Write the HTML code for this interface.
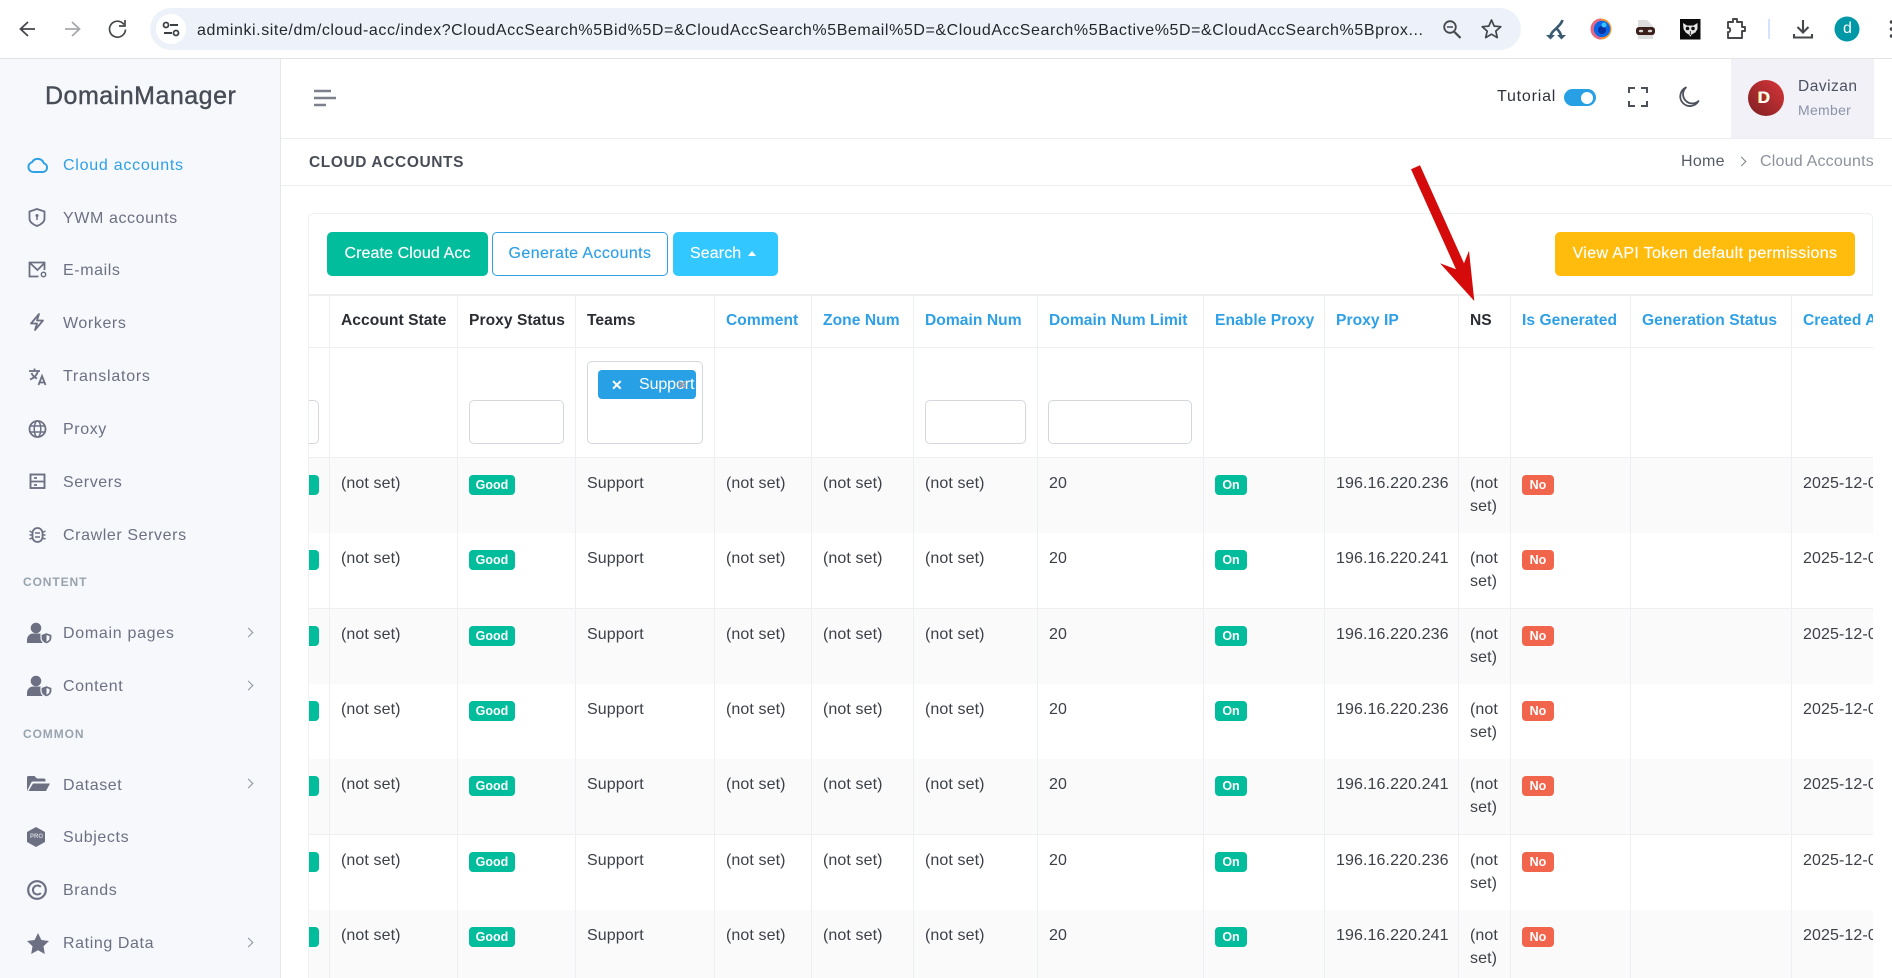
<!DOCTYPE html>
<html><head><meta charset="utf-8"><title>Cloud Accounts</title>
<style>
*{box-sizing:border-box;margin:0;padding:0}
html,body{width:1892px;height:978px;overflow:hidden;background:#fff;font-family:"Liberation Sans",sans-serif}
.a{position:absolute}
.t{position:absolute;white-space:nowrap;line-height:20px;height:20px}
.nav{font-size:16px;letter-spacing:.6px;color:#6d7083;left:63px}
.sec{font-size:12px;font-weight:bold;letter-spacing:.9px;color:#98a3ae;left:23px}
.chev{position:absolute;left:245px;width:7px;height:7px;border-top:1.6px solid #8c92a0;border-right:1.6px solid #8c92a0;transform:rotate(45deg)}
svg{position:absolute;overflow:visible}
.btn{position:absolute;top:232px;height:44px;border-radius:5px;font-size:16px;letter-spacing:.4px;display:flex;align-items:center;justify-content:center;color:#fff;-webkit-text-stroke:.15px}
#tb{position:absolute;left:308px;top:294px;width:1565px;height:684px;overflow:hidden;border-top:2px solid #eceef0;border-left:1px solid #eef0f2}
.r{position:absolute;left:0;display:flex;width:1700px;border-bottom:1px solid #eeeff1;font-size:16px;letter-spacing:.1px;color:#3d4048;background:#fff}
.s{background:#fafafa}
.c{flex:none;border-right:1.5px solid #eeeff1;padding:14px 0 0 11px;line-height:23px;white-space:nowrap;height:100%;position:relative;overflow:hidden}
.w0{width:21px}.w1{width:128px}.w2{width:118px}.w3{width:139px}.w4{width:97px}.w5{width:102px}.w6{width:124px}.w7{width:166px}.w8{width:121px}.w9{width:134px}.w10{width:52px}.w11{width:120px}.w12{width:161px}.w13{width:120px}
.h{font-size:15.6px;letter-spacing:.05px;font-weight:bold;color:#2a2d33;padding-top:13px}
.l{color:#2ea0e6;font-weight:bold}
.b{display:inline-block;height:20px;line-height:20px;border-radius:4px;color:#fff;font-size:12.5px;font-weight:bold;text-align:center;position:absolute;top:16.5px;left:11px;letter-spacing:0}
.g{background:#02bd9c}.n{background:#f1654c}
.in{position:absolute;top:52px;height:44px;border:1.5px solid #d4d8de;border-radius:5px;background:#fff}
.bc{position:absolute;left:-13px;top:17px;width:23px;height:20px;border-radius:4px;background:#02bd9c}
</style></head><body>

<!-- browser chrome -->
<div class="a" style="left:0;top:0;width:1892px;height:59px;background:#fff;border-bottom:1.5px solid #e3e4e6"></div>
<div class="a" style="left:150px;top:8px;width:1371px;height:42px;border-radius:21px;background:#edf2fa"></div>
<div class="a" style="left:156px;top:14px;width:30px;height:30px;border-radius:15px;background:#fff"></div>
<svg style="left:0;top:0" width="200" height="58" fill="none">
<path d="M35 29H21M28 22l-7.500 7 7.500 7" stroke="#45474b" stroke-width="1.800"/>
<path d="M65 29h14M72 22l7.500 7-7.500 7" stroke="#a8a9ac" stroke-width="1.800"/>
<path d="M124 24.500a8 8 0 1 0 1.500 5M125 20v6h-6" stroke="#45474b" stroke-width="1.700"/>
<path d="M170 25h8M164 33h8" stroke="#3c3f44" stroke-width="2"/><circle cx="166" cy="25" r="2.500" stroke="#3c3f44" stroke-width="1.800"/><circle cx="176" cy="33" r="2.500" stroke="#3c3f44" stroke-width="1.800"/>
</svg>
<svg style="left:0;top:0" width="1500" height="58"><text x="197" y="35" font-family="Liberation Sans" font-size="16" fill="#24272b" textLength="1226" lengthAdjust="spacing">adminki.site/dm/cloud-acc/index?CloudAccSearch%5Bid%5D=&amp;CloudAccSearch%5Bemail%5D=&amp;CloudAccSearch%5Bactive%5D=&amp;CloudAccSearch%5Bprox...</text></svg>
<svg style="left:1430px;top:0" width="462" height="58" fill="none">
<circle cx="20" cy="27" r="5.800" stroke="#45474b" stroke-width="1.800"/><path d="M24.500 32l6 6" stroke="#45474b" stroke-width="2.200"/><path d="M17 27h6" stroke="#45474b" stroke-width="1.500"/>
<path d="M61.500 20l2.700 6.100 6.600.6-5 4.400 1.500 6.500-5.800-3.400-5.800 3.400 1.500-6.500-5-4.400 6.600-.6z" stroke="#45474b" stroke-width="1.700" stroke-linejoin="round"/>
<path d="M132.500 20c-1 4-5 7-7 9s-4.500 4-5 7M126 28c2 2 4.500 4 5 8" stroke="#3a5a72" stroke-width="2.600"/><path d="M116 35h9l-4.500 4.500zM127 35h9l-4.500 4.500z" fill="#3a5a72"/>
<circle cx="171" cy="29" r="10.500" fill="#f7962c"/><path d="M171 18.500a10.500 10.500 0 0 0 0 21z" fill="#df5aa0" opacity=".75"/><circle cx="172" cy="29" r="8.200" fill="#0a66e6"/><circle cx="172" cy="30" r="4" fill="#0a2f9e"/><circle cx="174" cy="25" r="2.500" fill="#38c4ff"/>
<path d="M208 20h9l6 6v13h-15z" fill="#dedede"/><rect x="206" y="27" width="19" height="8" rx="3" fill="#3b1f1b"/><ellipse cx="211" cy="31" rx="2.200" ry="1.300" fill="#d8d8d8"/><ellipse cx="220" cy="31" rx="2.200" ry="1.300" fill="#d8d8d8"/>
<rect x="250" y="19" width="20.500" height="20.500" fill="#0b0b0b"/><path d="M253 23l4 2.500h6.500l4-2.500v6l-2.500 4-4.500 3.500-4.500-3.500-2.500-4z" fill="#e4e4e4"/><circle cx="257.500" cy="28.500" r="1.800" fill="#0b0b0b"/><circle cx="263" cy="28.500" r="1.800" fill="#0b0b0b"/><path d="M260.300 31v4M255.500 33l4 2.500M265 33l-4 2.500" stroke="#0b0b0b" stroke-width=".8"/>
<path d="M298 22h5v-3h4v3h5v5h3v4h-3v7h-14v-6c3 .5 3-5 0-4z" stroke="#45474b" stroke-width="1.900" stroke-linejoin="round"/>
<rect x="338" y="19" width="2" height="20" fill="#d3e3fd"/>
<path d="M373 20v12M367.500 27l5.500 5.500 5.500-5.500" stroke="#45474b" stroke-width="2.100"/><path d="M364 34v3.500h18V34" stroke="#45474b" stroke-width="2.100"/>
<circle cx="417" cy="29" r="12.500" fill="#0097a7"/>
<circle cx="461.500" cy="22" r="1.800" fill="#45474b"/><circle cx="461.500" cy="29" r="1.800" fill="#45474b"/><circle cx="461.500" cy="36" r="1.800" fill="#45474b"/>
</svg>
<div class="t" style="left:1843px;top:19px;font-size:16px;color:#fff">d</div>

<!-- sidebar -->
<div class="a" style="left:0;top:59px;width:281px;height:919px;background:#f6f8fb;border-right:1.5px solid #e4e6ea"></div>
<div class="t" style="left:45px;top:86px;font-size:25px;letter-spacing:.5px;color:#474c56;-webkit-text-stroke:.4px #474c56">DomainManager</div>

<svg style="left:0;top:0" width="60" height="978" fill="none" stroke="#6d7083" stroke-width="1.800">
<path d="M33.500 172a5 5 0 0 1-1.500-9.800 6.500 6.500 0 0 1 11.800 1a4.500 4.500 0 0 1-.8 8.800z" stroke="#2ea0e6" stroke-width="2" stroke-linejoin="round"/>
<path d="M37 209l7.500 2.500v7c0 3.500-3.500 6-7.500 7.500-4-1.500-7.500-4-7.500-7.500v-7z"/><circle cx="37" cy="215.500" r="1.500" fill="#6d7083" stroke="none"/><path d="M37 216v4" stroke-width="1.500"/>
<path d="M44.500 270v-7.500h-15v14h9M30 263l7.500 7 7-7"/><circle cx="43.500" cy="274.500" r="2.200" stroke-width="1.500"/>
<path d="M39 314l-8 9.500h6l-2 6.500 8-9.500h-6z" stroke-linejoin="round"/>
<path d="M29 371h11M34.500 368.500V371M38 371c-1 4-4 7-8 8.500M31.500 373c1 2.500 3 4.500 5.500 5.500"/><path d="M38.500 385l3.500-9 3.500 9M39.500 382.500h5"/>
<circle cx="37.500" cy="429" r="8"/><ellipse cx="37.500" cy="429" rx="3.300" ry="8" stroke-width="1.500"/><path d="M29.500 426h16M29.500 432h16" stroke-width="1.500"/>
<rect x="30.500" y="474.500" width="14" height="13.500" stroke-width="1.900"/><path d="M30.500 481.500h14M34 478h3M34 485h3"/>
<rect x="32.500" y="528" width="10" height="14" rx="5"/><path d="M35 533h5M35 537h5M29.500 531l3 1.500M29.500 535h3M29.500 539l3-1M45.500 531l-3 1.500M45.500 535h-3M45.500 539l-3-1" stroke-width="1.500"/>
<g stroke="none"><circle cx="36" cy="628" r="5.300" fill="#6d7083"/><path d="M27 643v-3c0-4 3-6.500 6-6.500h6c1.500 0 3 .5 3.500 1v8.500z" fill="#6d7083"/><path d="M46.500 632.500l5.500 2v3.500c0 3-2.500 5-5.500 6-3-1-5.500-3-5.500-6v-3.500z" fill="#6d7083" stroke="#f6f8fb" stroke-width="1.200"/><path d="M46.500 635l3 1.100v2c0 1.800-1.300 2.800-3 3.500z" fill="#f6f8fb"/></g>
<g stroke="none" transform="translate(0 53)"><circle cx="36" cy="628" r="5.300" fill="#6d7083"/><path d="M27 643v-3c0-4 3-6.500 6-6.500h6c1.500 0 3 .5 3.500 1v8.500z" fill="#6d7083"/><path d="M46.500 632.500l5.500 2v3.500c0 3-2.500 5-5.500 6-3-1-5.500-3-5.500-6v-3.500z" fill="#6d7083" stroke="#f6f8fb" stroke-width="1.200"/><path d="M46.500 635l3 1.100v2c0 1.800-1.300 2.800-3 3.500z" fill="#f6f8fb"/></g>
<path d="M27 791v-13.500c0-1 .6-1.500 1.500-1.500h6l2.500 2.500h7c1 0 1.500.5 1.500 1.500v1.500H33c-1 0-1.700.5-2 1.500zM33 783.500h17l-4 7.500H28.500z" fill="#6d7083" stroke="none"/>
<path d="M36 827l9 5v10l-9 5-9-5v-10z" fill="#6d7083" stroke="none"/>
<circle cx="37" cy="890" r="8.800" stroke-width="2.200"/><path d="M40.800 887a4.500 4.500 0 1 0 0 6" stroke-width="2"/>
<path d="M38 933l3.400 7 7.600 1-5.500 5.300 1.300 7.700-6.800-3.700-6.800 3.700 1.300-7.700-5.500-5.300 7.600-1z" fill="#6d7083" stroke="none"/>
</svg>
<div class="t" style="left:30px;top:833px;font-size:6px;line-height:8px;height:8px;font-weight:bold;color:#cfd2da;letter-spacing:0">PRO</div>

<div class="t nav" style="top:156px;color:#2ea0e6;letter-spacing:.75px">Cloud accounts</div>
<div class="t nav" style="top:209px">YWM accounts</div>
<div class="t nav" style="top:261px">E-mails</div>
<div class="t nav" style="top:314px">Workers</div>
<div class="t nav" style="top:367px;letter-spacing:.75px">Translators</div>
<div class="t nav" style="top:420px">Proxy</div>
<div class="t nav" style="top:473px">Servers</div>
<div class="t nav" style="top:526px">Crawler Servers</div>
<div class="t sec" style="top:572px">CONTENT</div>
<div class="t nav" style="top:624px;letter-spacing:.7px">Domain pages</div><div class="chev" style="top:629px"></div>
<div class="t nav" style="top:677px">Content</div><div class="chev" style="top:682px"></div>
<div class="t sec" style="top:724px">COMMON</div>
<div class="t nav" style="top:776px">Dataset</div><div class="chev" style="top:780px"></div>
<div class="t nav" style="top:828px">Subjects</div>
<div class="t nav" style="top:881px">Brands</div>
<div class="t nav" style="top:934px">Rating Data</div><div class="chev" style="top:939px"></div>

<!-- top header -->
<div class="a" style="left:281px;top:138px;width:1611px;height:1px;background:#eceef0"></div>
<div class="a" style="left:281px;top:185px;width:1611px;height:1px;background:#eceef0"></div>
<svg style="left:314px;top:88px" width="24" height="20"><path d="M0 3h17M0 10h22M0 17h12" stroke="#7b808c" stroke-width="2.400"/></svg>
<div class="t" style="left:1497px;top:87px;font-size:16px;letter-spacing:.8px;color:#2f323a">Tutorial</div>
<div class="a" style="left:1564px;top:89px;width:32px;height:17px;border-radius:9px;background:#27a0e5"></div>
<div class="a" style="left:1581px;top:91.500px;width:12px;height:12px;border-radius:6px;background:#fff"></div>
<svg style="left:1628px;top:87px" width="20" height="20" fill="none"><path d="M1 6V1h6M13 1h6v5M19 14v5h-6M7 19H1v-5" stroke="#4c505a" stroke-width="2"/></svg>
<svg style="left:1678px;top:86px" width="22" height="22" fill="none"><path d="M8 1.500A9.700 9.700 0 1 0 20.500 15 9 9 0 0 1 8 1.500z" stroke="#4c505a" stroke-width="1.800" stroke-linejoin="round"/></svg>
<div class="a" style="left:1731px;top:59px;width:143px;height:79px;background:#f1f1f7"></div>
<div class="a" style="left:1748px;top:80px;width:36px;height:36px;border-radius:18px;background:linear-gradient(45deg,#7d1f22,#d9363a)"></div>
<div class="t" style="left:1758px;top:88px;font-size:17px;font-weight:bold;color:#fff;text-shadow:-1px 0 #e0b030">D</div>
<div class="t" style="left:1798px;top:77px;font-size:15.500px;letter-spacing:.5px;color:#4c5262">Davizan</div>
<div class="t" style="left:1798px;top:100px;font-size:14px;letter-spacing:.3px;color:#8b93a7">Member</div>

<!-- breadcrumb bar -->
<div class="t" style="left:309px;top:153px;font-size:15.500px;font-weight:bold;letter-spacing:.6px;color:#474c56">CLOUD ACCOUNTS</div>
<div class="t" style="left:1681px;top:152px;font-size:16px;letter-spacing:.3px;color:#565b66">Home</div>
<div class="a" style="left:1738px;top:158px;width:7px;height:7px;border-top:1.400px solid #7c818c;border-right:1.400px solid #7c818c;transform:rotate(45deg)"></div>
<div class="t" style="left:1760px;top:152px;font-size:16px;letter-spacing:.2px;color:#8c929c">Cloud Accounts</div>

<!-- card -->
<div class="a" style="left:308px;top:213px;width:1565px;height:765px;border:1.500px solid #eef0f2;border-bottom:0;border-radius:5px 5px 0 0"></div>
<div class="btn" style="left:327px;width:161px;background:#02bd9c;letter-spacing:.1px">Create Cloud Acc</div>
<div class="btn" style="left:492px;width:176px;background:#fff;border:1.500px solid #2ea0e6;color:#2ea0e6">Generate Accounts</div>
<div class="btn" style="left:673px;width:105px;background:#33c7ff;justify-content:flex-start;padding-left:17px;letter-spacing:.1px">Search</div>
<div class="a" style="left:748px;top:251px;width:0;height:0;border-left:4.500px solid transparent;border-right:4.500px solid transparent;border-bottom:5px solid #fff"></div>
<div class="btn" style="left:1555px;width:300px;background:#ffbc0d;letter-spacing:.35px">View API Token default permissions</div>

<div id="tb">
<div class="r" style="top:0;height:52px">
<div class="c h w0"></div><div class="c h w1">Account State</div><div class="c h w2">Proxy Status</div><div class="c h w3">Teams</div><div class="c h l w4">Comment</div><div class="c h l w5">Zone Num</div><div class="c h l w6">Domain Num</div><div class="c h l w7">Domain Num Limit</div><div class="c h l w8">Enable Proxy</div><div class="c h l w9">Proxy IP</div><div class="c h w10">NS</div><div class="c h l w11">Is Generated</div><div class="c h l w12">Generation Status</div><div class="c h l w13">Created At</div>
</div>
<div class="r" style="top:52px;height:110px">
<div class="c w0"><div class="in" style="left:-40px;width:50px"></div></div><div class="c w1"></div><div class="c w2"><div class="in" style="left:11px;width:95px"></div></div>
<div class="c w3"><div class="in" style="left:11px;top:13px;width:116px;height:83px"></div>
<div class="a" style="left:22px;top:22px;width:98px;height:29px;border-radius:4px;background:#27a0e5"></div>
<div class="t" style="left:35px;top:27px;color:#fff;font-size:14px;font-weight:bold;letter-spacing:0">✕</div>
<div class="t" style="left:63px;top:27px;color:#fff;font-size:16px;letter-spacing:-.1px">Support</div>
<div class="t" style="left:101px;top:27px;color:#a39aa0;font-size:12px;font-weight:bold;letter-spacing:0">✕</div></div>
<div class="c w4"></div><div class="c w5"></div><div class="c w6"><div class="in" style="left:11px;width:101px"></div></div><div class="c w7"><div class="in" style="left:10px;width:144px"></div></div><div class="c w8"></div><div class="c w9"></div><div class="c w10"></div><div class="c w11"></div><div class="c w12"></div><div class="c w13"></div>
</div>

<div class="r s" style="top:162px;height:76px"><div class="c w0"><span class="bc"></span></div><div class="c w1">(not set)</div><div class="c w2"><span class="b g" style="width:46px">Good</span></div><div class="c w3">Support</div><div class="c w4">(not set)</div><div class="c w5">(not set)</div><div class="c w6">(not set)</div><div class="c w7">20</div><div class="c w8"><span class="b g" style="width:32px">On</span></div><div class="c w9">196.16.220.236</div><div class="c w10">(not<br>set)</div><div class="c w11"><span class="b n" style="width:32px">No</span></div><div class="c w12"></div><div class="c w13">2025-12-03</div></div>

<div class="r" style="top:237px;height:76px"><div class="c w0"><span class="bc"></span></div><div class="c w1">(not set)</div><div class="c w2"><span class="b g" style="width:46px">Good</span></div><div class="c w3">Support</div><div class="c w4">(not set)</div><div class="c w5">(not set)</div><div class="c w6">(not set)</div><div class="c w7">20</div><div class="c w8"><span class="b g" style="width:32px">On</span></div><div class="c w9">196.16.220.241</div><div class="c w10">(not<br>set)</div><div class="c w11"><span class="b n" style="width:32px">No</span></div><div class="c w12"></div><div class="c w13">2025-12-03</div></div>

<div class="r s" style="top:313px;height:76px"><div class="c w0"><span class="bc"></span></div><div class="c w1">(not set)</div><div class="c w2"><span class="b g" style="width:46px">Good</span></div><div class="c w3">Support</div><div class="c w4">(not set)</div><div class="c w5">(not set)</div><div class="c w6">(not set)</div><div class="c w7">20</div><div class="c w8"><span class="b g" style="width:32px">On</span></div><div class="c w9">196.16.220.236</div><div class="c w10">(not<br>set)</div><div class="c w11"><span class="b n" style="width:32px">No</span></div><div class="c w12"></div><div class="c w13">2025-12-03</div></div>

<div class="r" style="top:388px;height:76px"><div class="c w0"><span class="bc"></span></div><div class="c w1">(not set)</div><div class="c w2"><span class="b g" style="width:46px">Good</span></div><div class="c w3">Support</div><div class="c w4">(not set)</div><div class="c w5">(not set)</div><div class="c w6">(not set)</div><div class="c w7">20</div><div class="c w8"><span class="b g" style="width:32px">On</span></div><div class="c w9">196.16.220.236</div><div class="c w10">(not<br>set)</div><div class="c w11"><span class="b n" style="width:32px">No</span></div><div class="c w12"></div><div class="c w13">2025-12-03</div></div>

<div class="r s" style="top:463px;height:76px"><div class="c w0"><span class="bc"></span></div><div class="c w1">(not set)</div><div class="c w2"><span class="b g" style="width:46px">Good</span></div><div class="c w3">Support</div><div class="c w4">(not set)</div><div class="c w5">(not set)</div><div class="c w6">(not set)</div><div class="c w7">20</div><div class="c w8"><span class="b g" style="width:32px">On</span></div><div class="c w9">196.16.220.241</div><div class="c w10">(not<br>set)</div><div class="c w11"><span class="b n" style="width:32px">No</span></div><div class="c w12"></div><div class="c w13">2025-12-03</div></div>

<div class="r" style="top:539px;height:76px"><div class="c w0"><span class="bc"></span></div><div class="c w1">(not set)</div><div class="c w2"><span class="b g" style="width:46px">Good</span></div><div class="c w3">Support</div><div class="c w4">(not set)</div><div class="c w5">(not set)</div><div class="c w6">(not set)</div><div class="c w7">20</div><div class="c w8"><span class="b g" style="width:32px">On</span></div><div class="c w9">196.16.220.236</div><div class="c w10">(not<br>set)</div><div class="c w11"><span class="b n" style="width:32px">No</span></div><div class="c w12"></div><div class="c w13">2025-12-03</div></div>

<div class="r s" style="top:614px;height:76px"><div class="c w0"><span class="bc"></span></div><div class="c w1">(not set)</div><div class="c w2"><span class="b g" style="width:46px">Good</span></div><div class="c w3">Support</div><div class="c w4">(not set)</div><div class="c w5">(not set)</div><div class="c w6">(not set)</div><div class="c w7">20</div><div class="c w8"><span class="b g" style="width:32px">On</span></div><div class="c w9">196.16.220.241</div><div class="c w10">(not<br>set)</div><div class="c w11"><span class="b n" style="width:32px">No</span></div><div class="c w12"></div><div class="c w13">2025-12-03</div></div>
</div>

<!-- red arrow -->
<svg style="left:0;top:0" width="1892" height="978"><polygon points="1411,169.300 1420,165.300 1464,263.300 1469,250.700 1474.300,301 1440,263.300 1456,269.300" fill="#d50a0a"/></svg>
</body></html>
